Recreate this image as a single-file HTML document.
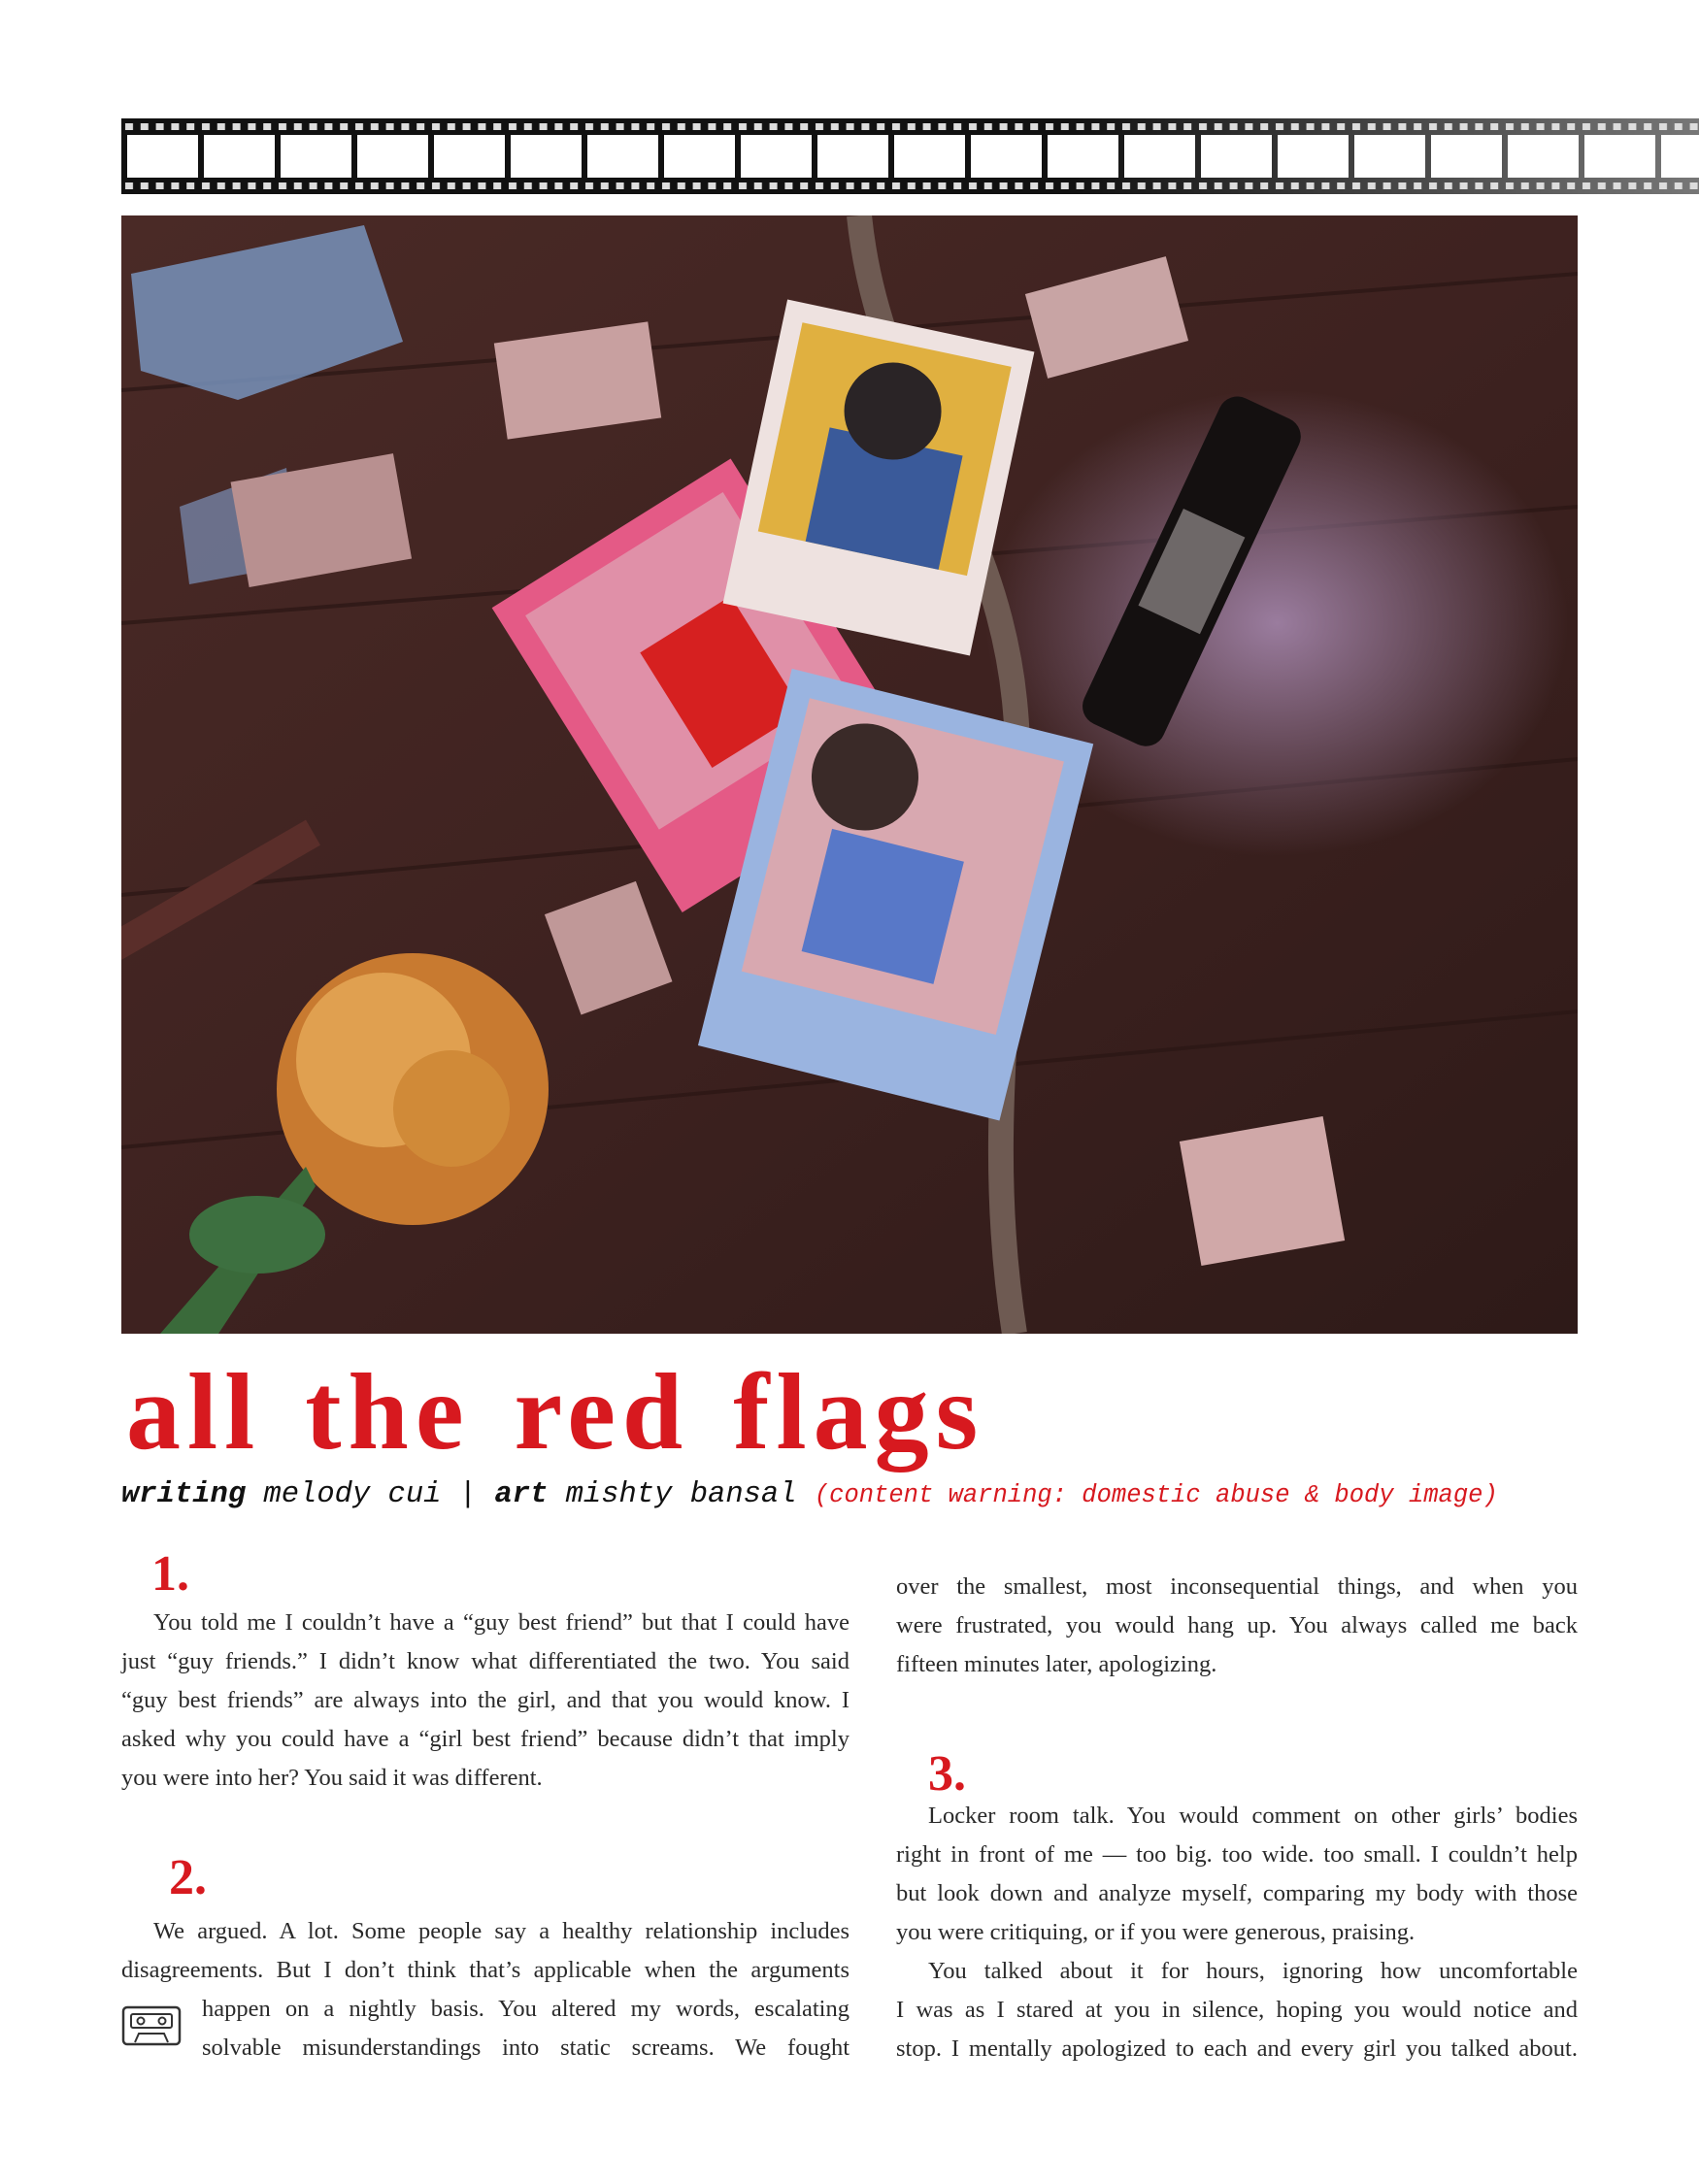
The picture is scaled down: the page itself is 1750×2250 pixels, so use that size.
<!DOCTYPE html>
<html><head><meta charset="utf-8"><style>
*{margin:0;padding:0;box-sizing:border-box}
body{width:1750px;height:2250px;background:#fff;position:relative;overflow:hidden;font-family:"Liberation Serif",serif}
.ab{position:absolute}
.l{position:absolute;font-size:24.5px;line-height:40px;color:#2a2a2a;text-align:justify;text-align-last:justify;white-space:nowrap}
.l.e{text-align-last:left}
.num{position:absolute;color:#d7191f;font-family:"Liberation Serif",serif;font-weight:bold}
</style></head><body>
<svg class="ab" style="left:125px;top:122px" width="1625" height="78">
<defs>
<pattern id="sp" x="0" y="0" width="15.8" height="78" patternUnits="userSpaceOnUse">
<rect x="4" y="5" width="8" height="7" fill="#ddd"/><rect x="4" y="66" width="8" height="7" fill="#ddd"/>
</pattern>
<pattern id="fr" x="0" y="0" width="79" height="78" patternUnits="userSpaceOnUse">
<rect x="6" y="17" width="73" height="44" fill="#fff"/>
</pattern>
<linearGradient id="fg" x1="0" x2="1"><stop offset="0.6" stop-color="#111"/><stop offset="1" stop-color="#777"/></linearGradient>
</defs>
<rect width="1625" height="78" fill="url(#fg)"/>
<rect width="1625" height="78" fill="url(#sp)"/>
<rect width="1625" height="78" fill="url(#fr)"/>
</svg>
<svg class="ab" style="left:125px;top:222px" width="1500" height="1152" viewBox="0 0 1500 1152">
<defs>
<linearGradient id="wd" x1="0" y1="0" x2="1" y2="1"><stop offset="0" stop-color="#4a2a26"/><stop offset="0.5" stop-color="#3e2220"/><stop offset="1" stop-color="#2e1a18"/></linearGradient>
<radialGradient id="pu" cx="0.5" cy="0.5" r="0.5"><stop offset="0" stop-color="#9a7c9e"/><stop offset="1" stop-color="#9a7c9e" stop-opacity="0"/></radialGradient>
</defs>
<rect width="1500" height="1152" fill="url(#wd)"/>
<g stroke="#2a1614" stroke-width="4" opacity="0.7">
<line x1="0" y1="180" x2="1500" y2="60"/><line x1="0" y1="420" x2="1500" y2="300"/><line x1="0" y1="700" x2="1500" y2="560"/><line x1="0" y1="960" x2="1500" y2="820"/>
</g>
<ellipse cx="1190" cy="420" rx="300" ry="240" fill="url(#pu)"/>
<path d="M10 60 L250 10 L290 130 L120 190 L20 160Z" fill="#7a98c4" opacity="0.8"/>
<path d="M60 300 L170 260 L180 360 L70 380Z" fill="#7a90b8" opacity="0.7"/>
<rect x="390" y="120" width="160" height="100" fill="#c8a0a0" transform="rotate(-8 470 170)"/>
<rect x="120" y="260" width="170" height="110" fill="#b89090" transform="rotate(-10 200 310)"/>
<rect x="940" y="60" width="150" height="90" fill="#c8a4a4" transform="rotate(-15 1015 105)"/>
<rect x="1100" y="940" width="150" height="130" fill="#d0a8a8" transform="rotate(-10 1175 1005)"/>
<rect x="450" y="700" width="100" height="110" fill="#c09898" transform="rotate(-20 500 750)"/>
<path d="M760 0 C780 200 900 300 920 500 C940 700 880 900 920 1152" stroke="#6e5a52" stroke-width="26" fill="none"/>
<rect x="-20" y="0" width="30" height="280" fill="#5a2e2a" transform="translate(200 640) rotate(60)"/>
<g transform="rotate(-32 600 480)"><rect x="455" y="300" width="290" height="370" fill="#e45a86"/><rect x="480" y="325" width="240" height="260" fill="#e090a8"/><rect x="560" y="420" width="110" height="140" fill="#d62020"/></g>
<g transform="rotate(12 780 270)"><rect x="650" y="110" width="260" height="320" fill="#eee2e0"/><rect x="670" y="130" width="220" height="220" fill="#e0b040"/><rect x="720" y="230" width="140" height="120" fill="#3a5a9a"/><circle cx="780" cy="200" r="50" fill="#2a2426"/></g>
<g transform="rotate(14 800 690)"><rect x="640" y="500" width="320" height="400" fill="#9ab4e0"/><rect x="665" y="525" width="270" height="290" fill="#d8a8b0"/><rect x="720" y="650" width="140" height="130" fill="#5878c8"/><circle cx="740" cy="590" r="55" fill="#3a2a28"/></g>
<g transform="rotate(25 1100 360)"><rect x="1060" y="180" width="90" height="370" rx="20" fill="#141010"/><rect x="1070" y="310" width="70" height="110" fill="#c8c0c0" opacity="0.5"/></g>
<g transform="translate(300 900)"><circle r="140" fill="#c87a30"/><circle cx="-30" cy="-30" r="90" fill="#e0a050"/><circle cx="40" cy="20" r="60" fill="#d08a38"/></g>
<path d="M200 1000 L100 1152 L40 1152 L190 980Z" fill="#3a6a3a"/>
<ellipse cx="140" cy="1050" rx="70" ry="40" fill="#3d7040"/>
</svg>
<div class="ab" style="left:130px;top:1395px;font-family:'Liberation Serif',serif;font-weight:bold;font-size:112px;color:#d7191f;letter-spacing:7px;word-spacing:10px;line-height:120px;white-space:nowrap">all the red flags</div>
<div class="ab" style="left:125px;top:1520px;font-family:'Liberation Mono',monospace;font-style:italic;font-size:30.5px;line-height:40px;color:#111;white-space:nowrap"><b>writing</b> melody cui | <b>art</b> mishty bansal <span style="color:#d7191f;font-size:25.5px">(content warning: domestic abuse &amp; body image)</span></div>
<div class="num" style="left:156px;top:1592px;font-size:52px">1.</div>
<div class="num" style="left:174px;top:1905px;font-size:52px">2.</div>
<div class="num" style="left:956px;top:1798px;font-size:52px">3.</div>
<div class="l" style="left:158px;top:1652px;width:717px">You told me I couldn’t have a “guy best friend” but that I could have</div>
<div class="l" style="left:125px;top:1692px;width:750px">just “guy friends.” I didn’t know what differentiated the two. You said</div>
<div class="l" style="left:125px;top:1732px;width:750px">“guy best friends” are always into the girl, and that you would know. I</div>
<div class="l" style="left:125px;top:1772px;width:750px">asked why you could have a “girl best friend” because didn’t that imply</div>
<div class="l e" style="left:125px;top:1812px;width:750px">you were into her? You said it was different.</div>
<div class="l" style="left:158px;top:1970px;width:717px">We argued. A lot. Some people say a healthy relationship includes</div>
<div class="l" style="left:125px;top:2010px;width:750px">disagreements. But I don’t think that’s applicable when the arguments</div>
<div class="l" style="left:208px;top:2050px;width:667px">happen on a nightly basis. You altered my words, escalating</div>
<div class="l" style="left:208px;top:2090px;width:667px">solvable misunderstandings into static screams. We fought</div>
<svg class="ab" style="left:125px;top:2066px" width="62" height="42" viewBox="0 0 62 42"><rect x="2" y="2" width="58" height="38" rx="4" fill="none" stroke="#333" stroke-width="2.5"/><rect x="10" y="9" width="42" height="14" rx="2" fill="none" stroke="#333" stroke-width="2"/><circle cx="20" cy="16" r="3.5" fill="none" stroke="#333" stroke-width="2"/><circle cx="42" cy="16" r="3.5" fill="none" stroke="#333" stroke-width="2"/><path d="M14 38 L18 29 H44 L48 38" fill="none" stroke="#333" stroke-width="2"/></svg>
<div class="l" style="left:923px;top:1615px;width:702px">over the smallest, most inconsequential things, and when you</div>
<div class="l" style="left:923px;top:1655px;width:702px">were frustrated, you would hang up. You always called me back</div>
<div class="l e" style="left:923px;top:1695px;width:702px">fifteen minutes later, apologizing.</div>
<div class="l" style="left:956px;top:1851px;width:669px">Locker room talk. You would comment on other girls’ bodies</div>
<div class="l" style="left:923px;top:1891px;width:702px">right in front of me — too big. too wide. too small. I couldn’t help</div>
<div class="l" style="left:923px;top:1931px;width:702px">but look down and analyze myself, comparing my body with those</div>
<div class="l e" style="left:923px;top:1971px;width:702px">you were critiquing, or if you were generous, praising.</div>
<div class="l" style="left:956px;top:2011px;width:669px">You talked about it for hours, ignoring how uncomfortable</div>
<div class="l" style="left:923px;top:2051px;width:702px">I was as I stared at you in silence, hoping you would notice and</div>
<div class="l" style="left:923px;top:2091px;width:702px">stop. I mentally apologized to each and every girl you talked about.</div>
</body></html>
